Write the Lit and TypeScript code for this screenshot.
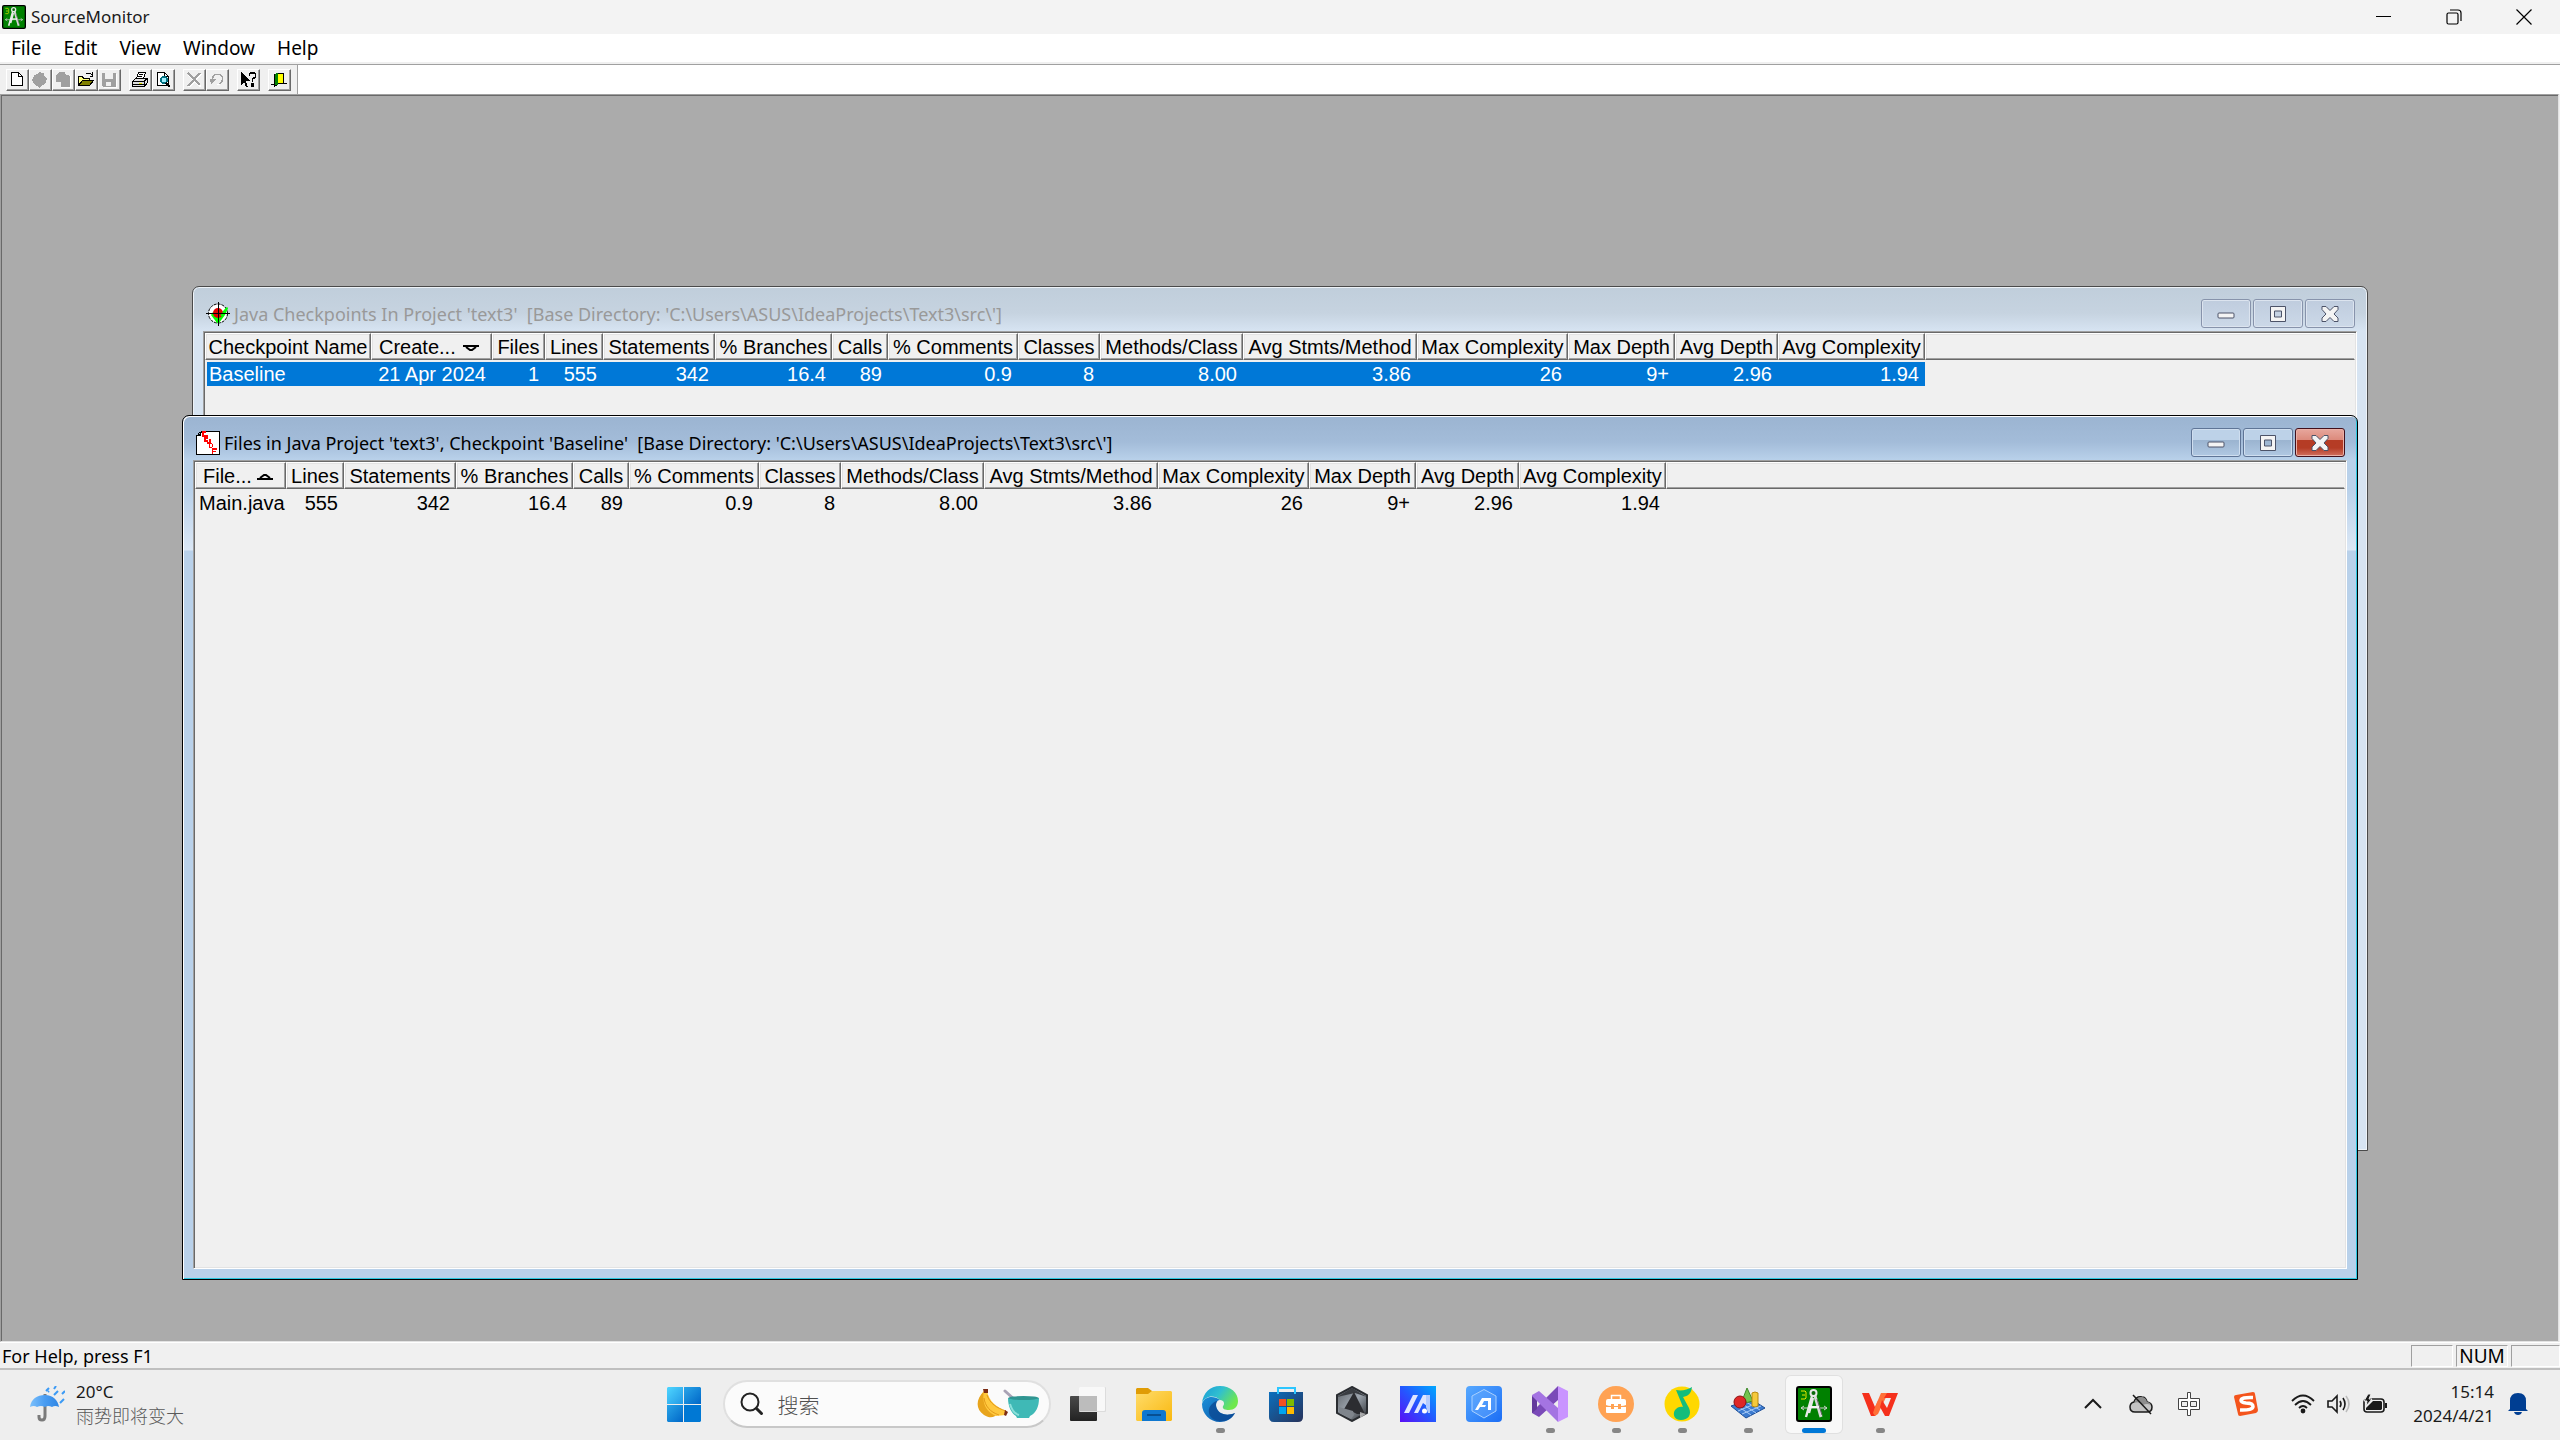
import { LitElement, html, svg, css, nothing } from "lit";
import { customElement, property } from "lit/decorators.js";
import { classMap } from "lit/directives/class-map.js";

/* ---------- Icons ---------- */

const compass = svg`
  <rect x="1" y="1" width="34" height="34" rx="2" fill="#008000" stroke="#000" stroke-width="2"/>
  <path d="M5 5h4l1 1v6l-1 1H5M6 9h3" fill="none" stroke="#e8e800" stroke-width="1"/>
  <path d="M5 22h26M8 20l-3 2 3 2M28 20l3 2-3 2" fill="none" stroke="#d0d0d0" stroke-width="1"/>
  <path d="M16 10L10 31M17 12l-4 15" stroke="#e8e8e8" stroke-width="2.4"/>
  <path d="M19 10l6 21" stroke="#d8d8d8" stroke-width="3"/>
  <path d="M21 13l5 16" stroke="#606060" stroke-width="1"/>
  <path d="M13 21h10" stroke="#f4f4f4" stroke-width="2"/>
  <circle cx="17.500" cy="7" r="3" fill="#0b6a0b" stroke="#e8e8e8" stroke-width="2"/>`;

const targetIcon = html`<svg class="ic24" viewBox="0 0 24 24" aria-hidden="true">
  <circle cx="12" cy="11.500" r="9.500" fill="#fff" stroke="#000" stroke-dasharray="3 1"/>
  <path d="M5 13l6 8 2 0 6-8 3-7-1-1-9 9-5-4z" fill="#0f0"/>
  <circle cx="12" cy="11" r="5" fill="#e00000"/>
  <path d="M15 14l6-8" stroke="#0f0" stroke-width="2"/>
  <path d="M0 11.500h24M12.500 0v24" stroke="#000"/>
</svg>`;

const filesIcon = html`<svg class="ic24" viewBox="0 0 24 24" aria-hidden="true" shape-rendering="crispEdges">
  <path d="M5.500 .5h18v23H.5v-19h3z" fill="#fff" stroke="#000"/>
  <path d="M.5 4.500l5-4M2 4h4" stroke="#000" stroke-dasharray="1 1"/>
  <path d="M10 1H7v4h3M12 5H9v5h3M9 7h3M14 8v4h-3M13.500 12.500h2l1 1v2l-1 1h-2zM16.500 23v-5h4M16.500 20.500h3" fill="none" stroke="#f00" stroke-width="1.200"/>
</svg>`;

const tool = (body: unknown) => html`<svg class="tool-icon" viewBox="0 0 22 22" shape-rendering="crispEdges" aria-hidden="true">${body}</svg>`;

const toolIcons = {
  fresh: tool(svg`<path d="M5.500 3.500h7l4 4v9h-11z" fill="#fff" stroke="#000"/><path d="M12.500 3.500v4h4" fill="none" stroke="#000"/>`),
  check: tool(svg`<path d="M10 3h1l1 1h3v2l2 3 2 1-2 1v3l-3 2-2 1-2 2-2-2-3-2-1-3-2-1 2-1 1-4 3-1z" fill="#a0a0a0"/>`),
  copies: tool(svg`<path d="M5 5l3-2h5l1 3h2l2 1v11H9v-5H4V7z" fill="#a0a0a0"/><path d="M18.500 7v11.500H9" stroke="#fff" fill="none"/>`),
  open: tool(svg`<path d="M3.500 16.500v-9h4l1 2h6v3" fill="#ffff80" stroke="#000"/><path d="M3.500 16.500l4-5h11l-4 5z" fill="#808000" stroke="#000"/><path d="M11 5l2-1h2l2 2M17.500 3v4h-3" fill="none" stroke="#000"/>`),
  save: tool(svg`<path d="M4 4h14v14H5l-1-1z" fill="#a0a0a0"/><path d="M7 4h8v6H7zM8 13h5v4H8z" fill="#f0f0f0"/><path d="M18.500 5v13.500H6" stroke="#fff" fill="none"/>`),
  print: tool(svg`<path d="M7.500 9.500l2-6h7l-2 6z" fill="#fff" stroke="#000"/><path d="M10 5.500h4M9 7.500h4" stroke="#000"/><path d="M3.500 12.500l3-3h12v4l-3 4h-12z" fill="#e0e0e0" stroke="#000"/><path d="M3 12.500h12l3-3M15.500 13v4M4 15.500h11" fill="none" stroke="#000"/><path d="M10 14h3" stroke="#e0e000" stroke-width="1"/>`),
  preview: tool(svg`<path d="M5.500 3.500h7l4 4v9h-11z" fill="#fff" stroke="#000"/><path d="M12.500 3.500v4h4" fill="none" stroke="#000"/><circle cx="12" cy="11" r="3" fill="#a0f0ff" stroke="#007080" stroke-width="1.500"/><path d="M14 14l4 4" stroke="#000" stroke-width="2"/>`),
  remove: tool(svg`<path d="M6 6l12 12M18 5L6 18" stroke="#fff" stroke-width="2"/><path d="M5 4l12 12M17 4L5 17" stroke="#a0a0a0" stroke-width="2"/>`),
  undo: tool(svg`<path d="M6.500 11c0-8 10-7 10-1 0 3-1 4-3 5" fill="none" stroke="#a0a0a0" stroke-width="1.500"/><path d="M4 10h6l-5 5z" fill="#a0a0a0"/><path d="M11 15h3" stroke="#fff"/>`),
  help: tool(svg`<path d="M4 3v13l3-3 2 5h2l-2-6h4z" fill="#000"/><path d="M12.500 7V5l1-1h4l1 1v3l-3 2v3M14.500 15h2v2h-2z" fill="none" stroke="#000" stroke-width="1.500"/>`),
  exit: tool(svg`<path d="M9.500 4.500h6v10h-6z" fill="#ffff00" stroke="#000"/><path d="M6 5l4-1v12l-4 2z" fill="#008000"/><path d="M3 15.500h3M15 14.500h4M6.500 4.500v13l3-2" fill="none" stroke="#000"/>`),
};

const t = (body: unknown) => html`<svg class="task-icon" viewBox="0 0 36 36" aria-hidden="true">${body}</svg>`;

const taskIcons = {
  windows: t(svg`<defs><linearGradient id="wg" x1="0" y1="0" x2="1" y2="1"><stop offset="0" stop-color="#4fd6ff"/><stop offset="1" stop-color="#2299e6"/></linearGradient>
    <linearGradient id="wh" x1="0" y1="0" x2="1" y2="1"><stop offset="0" stop-color="#28a4e8"/><stop offset="1" stop-color="#0067c8"/></linearGradient></defs>
    <path d="M2 1h15v17H1V2z" fill="url(#wg)"/><path d="M18 1h16l1 1v16H18z" fill="url(#wh)"/><path d="M1 19h16v17H2l-1-1z" fill="url(#wh)"/><path d="M18 19h17v16l-1 1H18z" fill="#0078d4"/>`),
  taskview: t(svg`<defs><linearGradient id="tva" x1="0" y1="0" x2="0" y2="1"><stop offset="0" stop-color="#4a4a4a"/><stop offset="1" stop-color="#222"/></linearGradient></defs>
    <rect y="10" width="27" height="25" rx="1" fill="url(#tva)"/><rect x="9" y="1" width="27" height="25" rx="1" fill="#dcdcdc"/><rect x="9" y="1" width="26" height="24" rx="1" fill="#f8f8f8"/><path d="M9 10h18v15H9z" fill="#bcbcbc"/>`),
  explorer: t(svg`<defs><linearGradient id="fe" x1="0" y1="0" x2="1" y2="1"><stop offset="0" stop-color="#ffdc6b"/><stop offset="1" stop-color="#f9b80f"/></linearGradient></defs>
    <path d="M0 3l1-1h11l4 3v5H0z" fill="#e09c05"/><path d="M0 8h12l4-3h19l1 1v28l-1 1H1l-1-1z" fill="url(#fe)"/><path d="M6 35V27q0-3 3-3h18q3 0 3 3v8z" fill="#0f77cf"/><path d="M11 29h14" stroke="#074f92" stroke-width="2"/>`),
  edge: t(svg`<defs><linearGradient id="eb" x1="0" y1="0" x2="1" y2="1"><stop offset="0" stop-color="#1b8fd8"/><stop offset="1" stop-color="#0c56a8"/></linearGradient>
    <linearGradient id="eg" x1="0" y1="0" x2="1" y2="0.5"><stop offset="0" stop-color="#189bd8"/><stop offset=".5" stop-color="#30bfd0"/><stop offset="1" stop-color="#6ee84c"/></linearGradient></defs>
    <path d="M0 17C1 7 8 0 18 0c11 0 18 7 18 15 0 6-4 9-9 9-4 0-7-1-6-4 2-2 1-6-3-6-6-6-15-4-18 3z" fill="url(#eg)"/>
    <path d="M0 18c2-8 12-9 18-4-4 0-5 5-3 9 3 6 11 7 18 4-3 6-9 9-15 9C8 36 0 28 0 18z" fill="url(#eb)"/>
    <path d="M11 33C3 27 7 16 18 14c-4 0-5 5-3 9 3 6 11 7 18 4-4 7-13 11-22 6z" fill="#0b4a94" opacity=".8"/>`),
  store: t(svg`<defs><linearGradient id="st" x1="0" y1="0" x2="1" y2="1"><stop offset="0" stop-color="#0c70be"/><stop offset="1" stop-color="#27325a"/></linearGradient></defs>
    <path d="M1 6h34v25q0 5-5 5H6q-5 0-5-5z" fill="url(#st)"/><path d="M10 8V2h17v6" fill="none" stroke="#2cc6ff" stroke-width="2"/>
    <path d="M11 13h7v7h-7z" fill="#f25022"/><path d="M19 13h7v7h-7z" fill="#7fba00"/><path d="M11 21h7v7h-7z" fill="#00a4ef"/><path d="M19 21h7v7h-7z" fill="#ffb900"/>`),
  armoury: t(svg`<defs><linearGradient id="ar" x1="0" y1="0" x2="1" y2="1"><stop offset="0" stop-color="#5c6065"/><stop offset=".5" stop-color="#9ca4ad"/><stop offset="1" stop-color="#25282c"/></linearGradient></defs>
    <path d="M18 1l15 8v18l-15 8-15-8V9z" fill="url(#ar)" stroke="#2a2d31" stroke-width="2"/><path d="M3 11l15-9 15 9-12-4z" fill="#3a3d42"/><path d="M20 6L9 25h8l6 3 8 0z" fill="#2c2d31"/><path d="M5 21l14 4 1 4-3 4L5 27z" fill="#7f858c"/><path d="M26 26l6 2-6 4z" fill="#d8d8d8" opacity=".7"/>`),
  myasus: t(svg`<defs><linearGradient id="my" x1="0" y1="1" x2="1" y2="0"><stop offset="0" stop-color="#5a0df5"/><stop offset=".5" stop-color="#2457ff"/><stop offset="1" stop-color="#00a8ff"/></linearGradient></defs>
    <path d="M0 0h36v36H0z" fill="url(#my)"/><path d="M4 27L13 9h5l-9 18zM14 27L23 9h4v11l-4-3-5 10z" fill="#dfe6ff"/><circle cx="24.500" cy="25" r="2.500" fill="#fff"/><path d="M26 9h4v18h-2l-2-6z" fill="#b4ccff"/>`),
  crate: t(svg`<defs><linearGradient id="cr" x1="0" y1="0" x2="1" y2="1"><stop offset="0" stop-color="#57a9ff"/><stop offset="1" stop-color="#1b6df5"/></linearGradient></defs>
    <rect width="36" height="36" rx="4" fill="url(#cr)"/><path d="M18 3.500l12 6.500v15l-12 7-12-7v-15z" fill="#6db0ff" fill-opacity=".4" stroke="#a8d0ff"/><path d="M9 24l7-12h9v12h-3v-9h-4l-2 4h4l-1 2h-5l-2 3z" fill="#fff"/>`),
  vs: t(svg`<path d="M26 0L0 26v1l7 4L26 14z" fill="#7a4ab8"/><path d="M0 9l5 4v10l-5 4z" fill="#643a9c"/><path d="M7 5L0 9v1l26 26V22z" fill="#a474e2"/><path d="M26 0l10 5v26l-10 5z" fill="#c994ff"/>`),
  briefcase: t(svg`<circle cx="18" cy="18" r="18" fill="#ffa253"/><path d="M13.500 13v-3.500h9V13" fill="none" stroke="#fff" stroke-width="1.500"/><path d="M8 15q0-2 2-2h16q2 0 2 2v4q-2 1-5 1v-2h-3v2h-4v-2h-3v2q-3 0-5-1z" fill="#fff"/><path d="M8 21h5v2h3v-2h4v2h3v-2h5v5q0 1-1 1H9q-1 0-1-1z" fill="#fff"/>`),
  music: t(svg`<circle cx="18" cy="18" r="17.500" fill="#ffd800"/><path d="M12 4c6 1 11 0 16-3-1 7-4 9-9 10l6 11c3 7-1 12-8 12-6 0-9-5-6-10 2-3 6-4 8-3L12 4z" fill="#14bd7c"/>`),
  shapes: t(svg`<path d="M1 20l20-7 14 9-19 10z" fill="#3c7bd0" stroke="#1e4f98"/><path d="M6 19l15 10M11 17l15 10M16 16l14 8M8 25l19-8M12 28l19-8" stroke="#a9cbf5" stroke-width="1"/><path d="M17 2l6 13q-6 3-11 0z" fill="#74c24e" stroke="#3c8a2a"/><path d="M22 7q3-2 6 0v13q-3 2-6 0z" fill="#f5c93c" stroke="#b98a10"/><circle cx="10" cy="16" r="6" fill="#df2727" stroke="#8d1010"/>`),
  compass: t(compass),
  wps: t(svg`<path d="M0 7h7l6 14 3-6 4 0-7 15H9z" fill="#f5301c"/><path d="M13 21l6-14h7L16 28l-3 2-2-3z" fill="#ff7038"/><path d="M20 14l5 8 4-10h-7l3-5h11L27 30h-4l-5-9z" fill="#f5301c"/>`),
};

/* ---------- Child window on the workspace canvas ---------- */

@customElement("mdi-window")
export class MdiWindow extends LitElement {
  @property() heading = "";
  @property({ type: Boolean }) active = false;

  static styles = css`
    :host { display: block; }
    .frame {
      box-sizing: border-box; height: 100%; display: flex; flex-direction: column;
      border: 1px solid #4a4a4a; border-radius: 7px 7px 0 0;
      box-shadow: inset 0 0 0 1px #eef3f8;
      padding: 0 10px 10px;
      background: linear-gradient(#c0cedb 0, #c6d3e0 26px, #d7e4f2 44px);
    }
    .frame.active {
      border-color: #000;
      box-shadow: inset 1px 1px 0 #fff, inset -1px -1px 0 #2cc8e0;
      background:
        linear-gradient(#9bb4d1 0, #a3bcd9 26px, #b9d1ea 44px, #b9d1ea 74px, #dbe7f5 134px, #b9d1ea 135px);
    }
    .title { display: flex; align-items: center; gap: 4px; height: 29px; padding: 12px 2px 3px 3px; }
    .title svg { display: block; }
    .ic24 { width: 24px; height: 24px; }
    h2 { flex: 1; margin: 0; font: 400 18px/24px "Noto Sans", "Open Sans", sans-serif; color: #999; white-space: pre; }
    .active h2 { color: #000; }
    .controls { display: flex; gap: 2px; }
    button {
      width: 50px; height: 29px; padding: 0; border: 1px solid #8793ab; border-radius: 3px;
      box-shadow: inset 0 0 0 1px #dce4ef; background: linear-gradient(#bfccde, #ccd9e8);
      display: grid; place-items: center;
    }
    .active button { border-color: #5f7596; box-shadow: inset 0 0 0 1px #cfdeef; background: linear-gradient(#bdd2e8 0 40%, #9bb4d0 42%, #b0c8e2); }
    .active button.close { border-color: #42101c; box-shadow: inset 0 0 0 1px #eab0a6; background: linear-gradient(#e7a79d, #dc8a7c 40%, #b53c25 42% 70%, #d0705f); }
    .client {
      flex: 1; min-height: 0; overflow: hidden; background: #f0f0f0;
      border: 1px solid; border-color: #a0a0a0 #fff #fff #a0a0a0;
      box-shadow: inset 1px 1px 0 #696969, inset -1px -1px 0 #e3e3e3;
      padding: 1px;
    }
  `;

  render() {
    return html`
      <section class=${classMap({ frame: true, active: this.active })} aria-label=${this.heading}>
        <header class="title">
          ${this.active ? filesIcon : targetIcon}
          <h2>${this.heading}</h2>
          <div class="controls">
            <button aria-label="Minimize"><svg width="18" height="18" viewBox="0 0 18 18"><rect x="1" y="8" width="16" height="5" rx="1" fill="#f4f4f4" stroke="#4c5368"/></svg></button>
            <button aria-label="Maximize"><svg width="18" height="18" viewBox="0 0 18 18"><path d="M1.500 1.500h15v15h-15zM5.500 6v6h7V6z" fill="#f4f4f4" fill-rule="evenodd" stroke="#4c5368"/></svg></button>
            <button class="close" aria-label="Close"><svg width="20" height="18" viewBox="0 0 20 18"><path d="M2 1.500h4l4 4 4-4h4v3l-4 4.500 4 4v3.500h-4l-4-4-4 4H2V13l4-4-4-4.500z" fill="#f4f4f4" stroke="#4c5368" stroke-linejoin="round"/></svg></button>
          </div>
        </header>
        <div class="client"><slot></slot></div>
      </section>`;
  }
}

/* ---------- Metrics list ---------- */

interface Column { label: string; width: number; value: string; sort?: "asc" | "desc"; }

const metrics: Column[] = [
  { label: "Lines", width: 58, value: "555" },
  { label: "Statements", width: 112, value: "342" },
  { label: "% Branches", width: 117, value: "16.4" },
  { label: "Calls", width: 56, value: "89" },
  { label: "% Comments", width: 130, value: "0.9" },
  { label: "Classes", width: 82, value: "8" },
  { label: "Methods/Class", width: 143, value: "8.00" },
  { label: "Avg Stmts/Method", width: 174, value: "3.86" },
  { label: "Max Complexity", width: 151, value: "26" },
  { label: "Max Depth", width: 107, value: "9+" },
  { label: "Avg Depth", width: 103, value: "2.96" },
  { label: "Avg Complexity", width: 147, value: "1.94" },
];

const checkpointColumns: Column[] = [
  { label: "Checkpoint Name", width: 166, value: "Baseline" },
  { label: "Create...", width: 121, value: "21 Apr 2024", sort: "desc" },
  { label: "Files", width: 53, value: "1" },
  ...metrics,
];

const fileColumns: Column[] = [
  { label: "File...", width: 91, value: "Main.java", sort: "asc" },
  ...metrics,
];

@customElement("metrics-table")
export class MetricsTable extends LitElement {
  @property({ attribute: false }) columns: Column[] = [];
  @property({ type: Boolean }) selected = false;

  static styles = css`
    :host { display: block; }
    table { width: 100%; table-layout: fixed; border-collapse: separate; border-spacing: 0; font: 400 20px/23px "Liberation Sans", Arial, sans-serif; color: #000; }
    th {
      height: 23px; padding: 2px 0 0; font-weight: 400; text-align: center; white-space: nowrap; background: #f0f0f0;
      border-top: 1px solid #fff; border-left: 1px solid #fff; border-right: 1px solid #696969; border-bottom: 1px solid #696969;
      box-shadow: inset -1px -1px 0 #a0a0a0, inset 1px 1px 0 #e3e3e3;
    }
    th:last-child { border-right-color: #f0f0f0; box-shadow: inset 0 -1px 0 #a0a0a0, inset 1px 1px 0 #e3e3e3; }
    .sorted { display: flex; align-items: center; justify-content: space-between; padding: 0 12px 0 7px; }
    .sorted svg { display: block; }
    td { height: 24px; line-height: 24px; padding: 0 6px 0 0; text-align: right; white-space: nowrap; }
    td:first-child { padding-left: 4px; padding-right: 0; text-align: left; }
    .gap td { height: 2px; line-height: 2px; padding: 0; }
    .selected td { background: #0078d7; color: #fff; }
    .selected td:first-child { background: linear-gradient(90deg, #f0f0f0 2px, #0078d7 2px); }
    .selected td:last-child { background: none; }
  `;

  render() {
    return html`
      <table>
        <colgroup>
          ${this.columns.map((c) => html`<col style="width:${c.width}px" />`)}
          <col />
        </colgroup>
        <thead>
          <tr>
            ${this.columns.map((c) => html`<th scope="col" aria-sort=${c.sort ? (c.sort === "asc" ? "ascending" : "descending") : nothing}>
              ${c.sort
                ? html`<div class="sorted"><span>${c.label}</span>
                    <svg width="16" height="8" viewBox="0 0 16 8"><path d=${c.sort === "asc" ? "M0 6h16M3 5l4-3h2l4 3" : "M0 2h16M3 3l4 3h2l4-3"} fill="none" stroke="#000" stroke-width="2"/></svg></div>`
                : c.label}
            </th>`)}
            <th aria-hidden="true"></th>
          </tr>
        </thead>
        <tbody>
          <tr class="gap" aria-hidden="true"><td></td></tr>
          <tr class=${classMap({ selected: this.selected })}>
            ${this.columns.map((c) => html`<td>${c.value}</td>`)}
            <td></td>
          </tr>
        </tbody>
      </table>`;
  }
}

/* ---------- Application shell ---------- */

interface Task { name: string; icon: unknown; running?: boolean; current?: boolean; }

const tasks: Task[] = [
  { name: "Task View", icon: taskIcons.taskview },
  { name: "File Explorer", icon: taskIcons.explorer },
  { name: "Edge", icon: taskIcons.edge, running: true },
  { name: "Store", icon: taskIcons.store },
  { name: "Armoury Crate", icon: taskIcons.armoury },
  { name: "MyASUS", icon: taskIcons.myasus },
  { name: "Crate Assistant", icon: taskIcons.crate },
  { name: "Visual Studio", icon: taskIcons.vs, running: true },
  { name: "Briefcase", icon: taskIcons.briefcase, running: true },
  { name: "Music", icon: taskIcons.music, running: true },
  { name: "Shapes", icon: taskIcons.shapes, running: true },
  { name: "SourceMonitor", icon: taskIcons.compass, running: true, current: true },
  { name: "WPS Office", icon: taskIcons.wps, running: true },
];

const toolGroups: { name: string; icon: unknown; off?: boolean }[][] = [
  [
    { name: "New", icon: toolIcons.fresh },
    { name: "New checkpoint", icon: toolIcons.check, off: true },
    { name: "Copy", icon: toolIcons.copies, off: true },
    { name: "Open", icon: toolIcons.open },
    { name: "Save", icon: toolIcons.save, off: true },
  ],
  [{ name: "Print", icon: toolIcons.print }, { name: "Print preview", icon: toolIcons.preview }],
  [{ name: "Delete", icon: toolIcons.remove, off: true }, { name: "Undo", icon: toolIcons.undo, off: true }],
  [{ name: "Context help", icon: toolIcons.help }],
  [{ name: "Exit", icon: toolIcons.exit }],
];

@customElement("app-root")
export class AppRoot extends LitElement {
  static styles = css`
    :host {
      display: flex; flex-direction: column; min-height: 100vh; background: #f0f0f0; color: #000;
      font: 400 17px/24px "Noto Sans", "Open Sans", "Noto Sans CJK SC", sans-serif;
    }
    button { font: inherit; color: inherit; border: 0; background: none; padding: 0; }
    svg { display: block; }

    .titlebar { display: flex; align-items: center; height: 34px; padding: 0 1px 0 2px; gap: 5px; background: #f3f3f3; }
    .titlebar h1 { flex: 1; margin: 0; font: inherit; color: #1a1a1a; }
    .caption-controls { display: flex; align-self: stretch; }
    .caption-controls button { width: 70px; display: grid; place-items: center; }
    .app-icon { width: 24px; height: 24px; }

    .menubar { display: flex; height: 28px; background: #fff; border-bottom: 2px solid #f0f0f0; }
    .menubar button { padding: 0 11px; font-size: 19px; line-height: 28px; }

    .toolbar { display: flex; background: #fff; border-top: 1px solid #a0a0a0; height: 29px; }
    .tools { display: flex; gap: 8px; padding: 4px 6px 3px 6px; background: #f0f0f0; border-right: 1px solid #a0a0a0; }
    .group { display: flex; }
    .group button {
      box-sizing: border-box; width: 23px; height: 22px; overflow: hidden;
      border: 1px solid; border-color: #fff #696969 #696969 #fff; box-shadow: inset -1px -1px 0 #a0a0a0;
    }
    .tool-icon { width: 22px; height: 22px; margin: -1px; }

    .workspace {
      flex: 1; position: relative; margin-right: 1px; background: #ababab;
      border-top: 1px solid #a0a0a0; border-left: 1px solid #a0a0a0; border-bottom: 1px solid #e3e3e3; border-right: 1px solid #e3e3e3;
      box-shadow: inset 1px 1px 0 #696969;
    }
    mdi-window { position: absolute; }
    .checkpoints { top: 191px; right: 190px; bottom: 190px; left: 191px; }
    .files { top: 320px; right: 200px; bottom: 61px; left: 181px; }

    .statusbar { display: flex; align-items: stretch; height: 22px; padding: 2px 0 1px 2px; border-top: 1px solid #fff; gap: 3px; line-height: 22px; font-size: 19px; }
    .statusbar p { flex: 1; margin: 0; font-size: 18px; }
    .pane { box-sizing: border-box; width: 42px; border: 1px solid; border-color: #a0a0a0 #fff #fff #a0a0a0; text-align: center; line-height: 20px; }
    .pane.num { width: 52px; }
    .pane.last { width: 49px; }

    .taskbar {
      display: grid; grid-template-columns: 1fr auto 1fr; height: 68px; padding-bottom: 2px; align-items: stretch;
      background: #eee; border-top: 2px solid #bfbfbf; color: #1a1a1a;
    }
    .weather { display: flex; align-items: center; justify-self: start; padding: 0 0 0 30px; gap: 11px; text-align: left; line-height: 24px; }
    .weather .desc { color: #5a5a5a; font-size: 18px; font-weight: 300; }
    .weather span { display: block; }
    .dock { display: flex; align-items: center; padding-left: 3px; }
    .task { width: 66px; height: 68px; position: relative; display: grid; place-items: center; }
    .task-icon { width: 36px; height: 36px; }
    .task.current .tile { background: #f8f8f8; border-radius: 5px; box-shadow: 0 0 0 1px #e0e0e0; width: 56px; height: 57px; display: grid; place-items: center; }
    .dot { position: absolute; left: 29px; bottom: 5px; width: 9px; height: 5px; border-radius: 3px; background: #868686; }
    .current .dot { left: 21px; width: 24px; background: #0078d7; }
    .search {
      display: flex; align-items: center; gap: 14px; box-sizing: border-box; width: 328px; height: 48px; margin: 0 4px 0 6px; padding: 0 10px 0 15px;
      background: #fbfbfb; border: 2px solid #e0e0e0; border-bottom-color: #c8c8c8; border-radius: 24px;
    }
    .search input { flex: 1; min-width: 0; border: 0; outline: 0; background: none; padding: 0; font: 300 21px/30px "Noto Sans CJK SC", sans-serif; }
    .search input::placeholder { color: #505050; opacity: 1; }
    .tray { display: flex; align-items: center; justify-self: end; padding-right: 32px; }
    .tray .slot { width: 48px; height: 68px; display: grid; place-items: center; }
    .tray .quick { display: flex; align-items: center; gap: 12px; padding: 0 17px 0 12px; }
    .tray .sogou { width: 66px; }
    .clock { min-width: 90px; text-align: right; line-height: 24px; }
    .clock time { display: block; }
    .bell { margin-left: 14px; }
  `;

  private renderTask(task: Task) {
    return html`<button class=${classMap({ task: true, current: !!task.current })} aria-label=${task.name}>
      <div class="tile">${task.icon}</div>
      ${task.running ? html`<span class="dot"></span>` : nothing}
    </button>`;
  }

  render() {
    return html`
      <header class="titlebar">
        <svg class="app-icon" viewBox="0 0 36 36" aria-hidden="true">${compass}</svg>
        <h1>SourceMonitor</h1>
        <div class="caption-controls">
          <button aria-label="Minimize"><svg width="16" height="16" viewBox="0 0 16 16"><path d="M0 7.500h15" stroke="#000"/></svg></button>
          <button aria-label="Restore"><svg width="16" height="16" viewBox="0 0 16 16" fill="none" stroke="#000" stroke-width="1.200"><rect x="1" y="4" width="11" height="11" rx="1.500"/><path d="M4 1h8q3 0 3 3v8"/></svg></button>
          <button aria-label="Close"><svg width="16" height="16" viewBox="0 0 16 16"><path d="M.5.5l15 15M15.500.5l-15 15" stroke="#000" stroke-width="1.200"/></svg></button>
        </div>
      </header>

      <nav class="menubar" aria-label="Menu">
        ${["File", "Edit", "View", "Window", "Help"].map((m) => html`<button>${m}</button>`)}
      </nav>

      <div class="toolbar" role="toolbar">
        <div class="tools">
          ${toolGroups.map((g) => html`<div class="group">${g.map((b) => html`<button aria-label=${b.name} ?disabled=${b.off}>${b.icon}</button>`)}</div>`)}
        </div>
      </div>

      <main class="workspace">
        <mdi-window class="checkpoints" heading="Java Checkpoints In Project 'text3'  [Base Directory: 'C:\\Users\\ASUS\\IdeaProjects\\Text3\\src\\']">
          <metrics-table .columns=${checkpointColumns} selected></metrics-table>
        </mdi-window>
        <mdi-window class="files" active heading="Files in Java Project 'text3', Checkpoint 'Baseline'  [Base Directory: 'C:\\Users\\ASUS\\IdeaProjects\\Text3\\src\\']">
          <metrics-table .columns=${fileColumns}></metrics-table>
        </mdi-window>
      </main>

      <div class="statusbar" role="status">
        <p>For Help, press F1</p>
        <div class="pane"></div>
        <div class="pane num">NUM</div>
        <div class="pane last"></div>
      </div>

      <footer class="taskbar">
        <button class="weather">
          <svg width="35" height="36" viewBox="0 0 35 36" aria-hidden="true">
            <defs><linearGradient id="um" x1="0" y1="0" x2="1" y2="0"><stop offset="0" stop-color="#7cc0fb"/><stop offset=".5" stop-color="#4a9df2"/><stop offset="1" stop-color="#2f86e4"/></linearGradient></defs>
            <path d="M15 8v22q0 4-3 4t-3-3v-2" fill="none" stroke="#7a7a7a" stroke-width="3"/>
            <path d="M0 21C1 13 7 9 15 9s13 5 14 12q-4-2-7 0-4-2-7 0-4-2-8 0-3-2-7 0z" fill="url(#um)"/>
            <path d="M16 5l3-3M24 3l2-3M32 8l3-3M24 9l4-4M30 17l4-4M19 5l-1 1" stroke="#3b9af5" stroke-width="2"/>
          </svg>
          <span><span>20°C</span><span class="desc">雨势即将变大</span></span>
        </button>

        <div class="dock">
          <button class="task" aria-label="Start">${taskIcons.windows}</button>
          <label class="search">
            <svg width="24" height="24" viewBox="0 0 24 24" fill="none" stroke="#222" stroke-linecap="round" aria-hidden="true"><circle cx="10" cy="10" r="8.500" stroke-width="2"/><path d="M16.500 16.500l5 5" stroke-width="3"/></svg>
            <input type="search" placeholder="搜索" aria-label="搜索" />
            <svg width="62" height="32" viewBox="0 0 62 32" aria-hidden="true">
              <path d="M7 3c-8 8-9 18 0 24 6 4 11 2 12 0-7-4-10-14-9-24z" fill="#e8a41c"/>
              <path d="M7 3c-2 9 0 20 12 25l9-1 1-4C19 19 12 13 10 3z" fill="#ffc83d"/>
              <path d="M10 7c3 9 10 13 19 16M7 10c1 8 6 14 15 17" fill="none" stroke="#e39a1a"/>
              <path d="M6 1h5v4H7zM28 22l3 2-2 4-2-1z" fill="#7c2b14"/>
              <path d="M28 3l11 10" stroke="#a9a3b5" stroke-width="3" stroke-linecap="round"/>
              <path d="M31 10h31c0 9-3 15-9 18l-1 2H40l-1-2c-5-3-8-10-8-18z" fill="#3fb9b6"/>
              <ellipse cx="46.500" cy="10" rx="15" ry="2" fill="#2f9591"/><path d="M33 16c2 7 5 10 9 11" stroke="#8be0da" stroke-width="2" fill="none"/>
            </svg>
          </label>
          ${tasks.map((x) => this.renderTask(x))}
        </div>

        <div class="tray">
          <button class="slot" aria-label="Hidden icons"><svg width="18" height="18" viewBox="0 0 18 18"><path d="M1 13l8-8 8 8" fill="none" stroke="#1a1a1a" stroke-width="2"/></svg></button>
          <button class="slot" aria-label="Cloud"><svg width="24" height="22" viewBox="0 0 24 22"><path d="M6 19q-5 0-5-5 0-4 4-5 2-6 8-5 4 0 5 5 5 1 5 5 0 5-5 5z" fill="#c4c4c4" stroke="#1a1a1a" stroke-width="1.500"/><path d="M5 10q5-2 9 2 4-2 8 0-1-3-4-3-1-5-6-5-5 0-7 6z" fill="#8d8d8d"/><path d="M4 2l18 19" stroke="#1a1a1a" stroke-width="1.500"/></svg></button>
          <button class="slot" aria-label="Input mode"><svg width="22" height="24" viewBox="0 0 22 24"><path d="M9.500.5h3v6h9v11h-9v6h-3v-6h-9v-11h9zM3.500 9.500v5h6v-5zM12.500 9.500v5h6v-5z" fill="#fff" fill-rule="evenodd" stroke="#444"/></svg></button>
          <button class="slot sogou" aria-label="Sogou"><svg width="24" height="24" viewBox="0 0 24 24"><path d="M2 3L19 0q2 0 2 2l3 16q0 2-2 3L6 24q-2 0-2-2L0 5q0-2 2-2z" fill="#f4541c"/><path d="M19 5.500Q7 5 7 8.500q0 2 5 2.500 7 0 7 3.500 0 4-13 3.500" fill="none" stroke="#fff" stroke-width="3.500"/></svg></button>
          <button class="quick" aria-label="Quick settings">
            <svg width="24" height="20" viewBox="0 0 24 20" fill="none" stroke="#1a1a1a" stroke-width="1.800"><path d="M1 7q11-11 22 0M4 11q8-8 16 0M8 14q4-4 8 0"/><circle cx="12" cy="17" r="1.500" fill="#1a1a1a"/></svg>
            <svg width="24" height="20" viewBox="0 0 24 20" fill="none" stroke="#1a1a1a" stroke-width="1.600"><path d="M1 7h4l5-5v16l-5-5H1z"/><path d="M13 7q2 3 0 6M16 4q4 6 0 12"/><path d="M19 2q6 8 0 16" stroke="#bcbcbc"/></svg>
            <svg width="24" height="20" viewBox="0 0 24 20"><rect x="1" y="5" width="20" height="13" rx="3" fill="none" stroke="#1a1a1a" stroke-width="1.600"/><path d="M10 7h8l1 1v7l-1 1H3v-2z" fill="#1a1a1a"/><path d="M22 9h2v5h-2z" fill="#1a1a1a"/><path d="M5 0L1 7h3l-1 5 6-7H6l2-5z" fill="#1a1a1a" stroke="#eee"/></svg>
          </button>
          <button class="clock"><time>15:14</time><time>2024/4/21</time></button>
          <button class="bell" aria-label="Notifications"><svg width="20" height="24" viewBox="0 0 20 24"><path d="M2 17V9q0-8 8-8t8 8v8l2 2H0z" fill="#003e92"/><path d="M6 20h8q-1 3-4 3t-4-3z" fill="#003e92"/></svg></button>
        </div>
      </footer>`;
  }
}
